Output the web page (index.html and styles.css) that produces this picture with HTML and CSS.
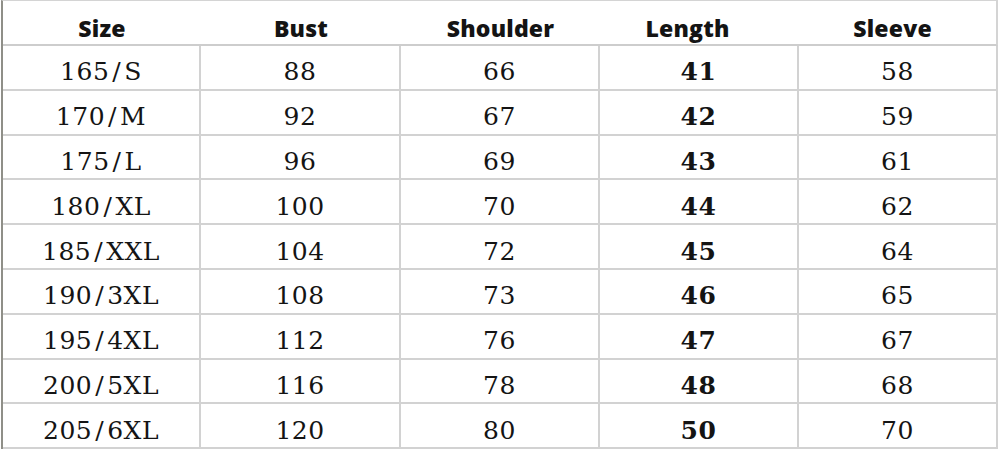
FILE: index.html
```html
<!DOCTYPE html>
<html>
<head>
<meta charset="utf-8">
<link rel="stylesheet" href="styles.css">
</head>
<body>
<div class="chart">
  <div class="hd">Size</div>
  <div class="hd">Bust</div>
  <div class="hd">Shoulder</div>
  <div class="hd hd-len">Length</div>
  <div class="hd hd-last">Sleeve</div>

  <div class="c">165<span class="sl">/</span>S</div><div class="c">88</div><div class="c">66</div><div class="c b">41</div><div class="c">58</div>
  <div class="c">170<span class="sl">/</span>M</div><div class="c">92</div><div class="c">67</div><div class="c b">42</div><div class="c">59</div>
  <div class="c">175<span class="sl">/</span>L</div><div class="c">96</div><div class="c">69</div><div class="c b">43</div><div class="c">61</div>
  <div class="c">180<span class="sl">/</span>XL</div><div class="c">100</div><div class="c">70</div><div class="c b">44</div><div class="c">62</div>
  <div class="c">185<span class="sl">/</span>XXL</div><div class="c">104</div><div class="c">72</div><div class="c b">45</div><div class="c">64</div>
  <div class="c">190<span class="sl">/</span>3XL</div><div class="c">108</div><div class="c">73</div><div class="c b">46</div><div class="c">65</div>
  <div class="c">195<span class="sl">/</span>4XL</div><div class="c">112</div><div class="c">76</div><div class="c b">47</div><div class="c">67</div>
  <div class="c">200<span class="sl">/</span>5XL</div><div class="c">116</div><div class="c">78</div><div class="c b">48</div><div class="c">68</div>
  <div class="c">205<span class="sl">/</span>6XL</div><div class="c">120</div><div class="c">80</div><div class="c b">50</div><div class="c">70</div>
</div>
</body>
</html>
```

FILE: styles.css
```css
html, body {
  margin: 0;
  padding: 0;
  background: #ffffff;
}

.chart {
  display: grid;
  grid-template-columns: 198px 200px 199px 199px 199px;
  grid-template-rows: 45px repeat(9, 44.8px);
  margin-left: 1px;
  width: 997px;
  border-left: 2px solid #8f8f88;
  border-top: 1px solid #d4d4d4;
  box-sizing: border-box;
  color: #141414;
}

.hd {
  display: flex;
  align-items: center;
  justify-content: center;
  padding-top: 11px;
  box-sizing: border-box;
  font-family: "Open Sans", "Noto Sans", sans-serif;
  font-weight: 800;
  font-size: 23px;
  letter-spacing: 0.2px;
  border-bottom: 2px solid #cdcdcd;
}

.hd-len {
  padding-right: 24px;
}

.hd-last {
  padding-right: 10px;
  border-right: 2px solid #d4d4d4;
}

.c {
  display: flex;
  align-items: center;
  justify-content: center;
  padding-top: 9px;
  box-sizing: border-box;
  font-family: "DejaVu Serif", "Liberation Serif", serif;
  font-size: 25px;
  letter-spacing: 0.5px;
  border-right: 2px solid #d2d2d2;
  border-bottom: 2px solid #d2d2d2;
}

.sl {
  margin: 0 3px 0 3px;
}

.b {
  font-weight: 700;
}
```
